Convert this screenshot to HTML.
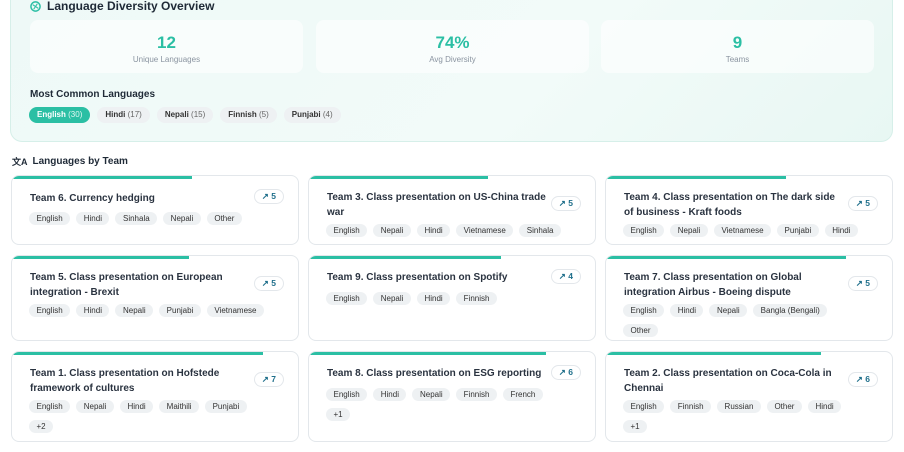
<!DOCTYPE html>
<html><head><meta charset="utf-8"><style>
*{box-sizing:border-box;margin:0;padding:0}
body{width:904px;height:452px;overflow:hidden;background:#fff;font-family:"Liberation Sans",sans-serif;color:#1f2a37;position:relative}
.ov{position:absolute;left:10px;top:-12px;width:883px;height:154px;border:1px solid #d6efe9;border-radius:12px;background:linear-gradient(135deg,#eef9f7,#f2fbf9 60%,#e8f7f3)}
.h1{position:absolute;left:30px;top:-1px;font-size:12px;font-weight:bold;color:#1f2a37;display:flex;align-items:center;gap:6px}
.stat{position:absolute;top:20px;height:53px;width:273px;background:rgba(255,255,255,.6);border-radius:8px;text-align:center}
.stat b{display:block;margin-top:13px;font-size:17px;color:#2bbfa4}
.stat span{display:block;font-size:8px;color:#8a94a0;margin-top:2px}
.mcl{position:absolute;left:30px;top:89px;font-size:10px;font-weight:bold}
.pills{position:absolute;left:29px;top:107px;display:flex;gap:7px}
.pill{height:16px;line-height:16px;padding:0 8px;border-radius:8px;background:#eef1f3;font-size:8px;font-weight:bold;color:#333}
.pill i{font-style:normal;font-weight:normal;color:#666}
.pill.on{background:#2bbfa4;color:#fff}.pill.on i{color:#e0f7f2}
.h2{position:absolute;left:12px;top:155px;font-size:10px;font-weight:bold;display:flex;gap:5px;align-items:center}
.card{position:absolute;width:288px;border:1px solid #e3e7eb;border-radius:8px;background:#fff;overflow:hidden}
.bar{position:absolute;left:0;top:0;height:3px;background:#2bbfa4}
.t{position:absolute;left:18px;top:14px;width:240px;white-space:nowrap;font-size:10px;font-weight:bold;line-height:15px;color:#2a3340}
.badge{position:absolute;right:14px;top:13px;height:15px;padding:0 7px;border:1px solid #e3e7eb;border-radius:8px;font-size:8.5px;line-height:13px;color:#1f6f8b;font-weight:bold}
.chips{position:absolute;left:17px;width:252px;display:flex;flex-wrap:wrap;gap:0 6px}
.c{height:13px;line-height:13px;padding:0 7.5px;border-radius:7px;background:#eef1f3;font-size:8px;color:#333;margin-bottom:7px}
.br{flex-basis:100%;height:0}
</style></head><body>
<div class="ov"></div>
<div class="h1"><svg width="11" height="11" viewBox="0 0 12 12"><circle cx="6" cy="6" r="5" fill="none" stroke="#2bbfa4" stroke-width="1.6"/><path d="M3 4l6 4M4 9l4-6" stroke="#2bbfa4" stroke-width="1.2"/></svg>Language Diversity Overview</div>
<div class="stat" style="left:30px"><b>12</b><span>Unique Languages</span></div>
<div class="stat" style="left:316px"><b>74%</b><span>Avg Diversity</span></div>
<div class="stat" style="left:601px"><b>9</b><span>Teams</span></div>
<div class="mcl">Most Common Languages</div>
<div class="pills"><div class="pill on">English <i>(30)</i></div><div class="pill">Hindi <i>(17)</i></div><div class="pill">Nepali <i>(15)</i></div><div class="pill">Finnish <i>(5)</i></div><div class="pill">Punjabi <i>(4)</i></div></div>
<div class="h2"><span style="font-size:9px">文A</span>Languages by Team</div>

<div class="card" style="left:11px;top:175px;height:70px"><div class="bar" style="width:180px"></div><div class="t" style="top:15px">Team 6. Currency hedging</div><div class="badge">↗ 5</div><div class="chips" style="top:36px"><span class="c">English</span><span class="c">Hindi</span><span class="c">Sinhala</span><span class="c">Nepali</span><span class="c">Other</span></div></div>
<div class="card" style="left:308px;top:175px;height:70px"><div class="bar" style="width:179px"></div><div class="t">Team 3. Class presentation on US-China trade<br>war</div><div class="badge" style="top:20px">↗ 5</div><div class="chips" style="top:48px"><span class="c">English</span><span class="c">Nepali</span><span class="c">Hindi</span><span class="c">Vietnamese</span><span class="c">Sinhala</span></div></div>
<div class="card" style="left:605px;top:175px;height:70px"><div class="bar" style="width:180px"></div><div class="t">Team 4. Class presentation on The dark side<br>of business - Kraft foods</div><div class="badge" style="top:20px">↗ 5</div><div class="chips" style="top:48px"><span class="c">English</span><span class="c">Nepali</span><span class="c">Vietnamese</span><span class="c">Punjabi</span><span class="c">Hindi</span></div></div>

<div class="card" style="left:11px;top:255px;height:86px"><div class="bar" style="width:177px"></div><div class="t">Team 5. Class presentation on European<br>integration - Brexit</div><div class="badge" style="top:20px">↗ 5</div><div class="chips" style="top:48px"><span class="c">English</span><span class="c">Hindi</span><span class="c">Nepali</span><span class="c">Punjabi</span><span class="c">Vietnamese</span></div></div>
<div class="card" style="left:308px;top:255px;height:86px"><div class="bar" style="width:192px"></div><div class="t">Team 9. Class presentation on Spotify</div><div class="badge">↗ 4</div><div class="chips" style="top:36px"><span class="c">English</span><span class="c">Nepali</span><span class="c">Hindi</span><span class="c">Finnish</span></div></div>
<div class="card" style="left:605px;top:255px;height:86px"><div class="bar" style="width:240px"></div><div class="t">Team 7. Class presentation on Global<br>integration Airbus - Boeing dispute</div><div class="badge" style="top:20px">↗ 5</div><div class="chips" style="top:48px"><span class="c">English</span><span class="c">Hindi</span><span class="c">Nepali</span><span class="c">Bangla (Bengali)</span><span class="br"></span><span class="c">Other</span></div></div>

<div class="card" style="left:11px;top:351px;height:91px"><div class="bar" style="width:251px"></div><div class="t">Team 1. Class presentation on Hofstede<br>framework of cultures</div><div class="badge" style="top:20px">↗ 7</div><div class="chips" style="top:48px"><span class="c">English</span><span class="c">Nepali</span><span class="c">Hindi</span><span class="c">Maithili</span><span class="c">Punjabi</span><span class="br"></span><span class="c">+2</span></div></div>
<div class="card" style="left:308px;top:351px;height:91px"><div class="bar" style="width:237px"></div><div class="t">Team 8. Class presentation on ESG reporting</div><div class="badge">↗ 6</div><div class="chips" style="top:36px"><span class="c">English</span><span class="c">Hindi</span><span class="c">Nepali</span><span class="c">Finnish</span><span class="c">French</span><span class="br"></span><span class="c">+1</span></div></div>
<div class="card" style="left:605px;top:351px;height:91px"><div class="bar" style="width:215px"></div><div class="t">Team 2. Class presentation on Coca-Cola in<br>Chennai</div><div class="badge" style="top:20px">↗ 6</div><div class="chips" style="top:48px"><span class="c">English</span><span class="c">Finnish</span><span class="c">Russian</span><span class="c">Other</span><span class="c">Hindi</span><span class="br"></span><span class="c">+1</span></div></div>
</body></html>
